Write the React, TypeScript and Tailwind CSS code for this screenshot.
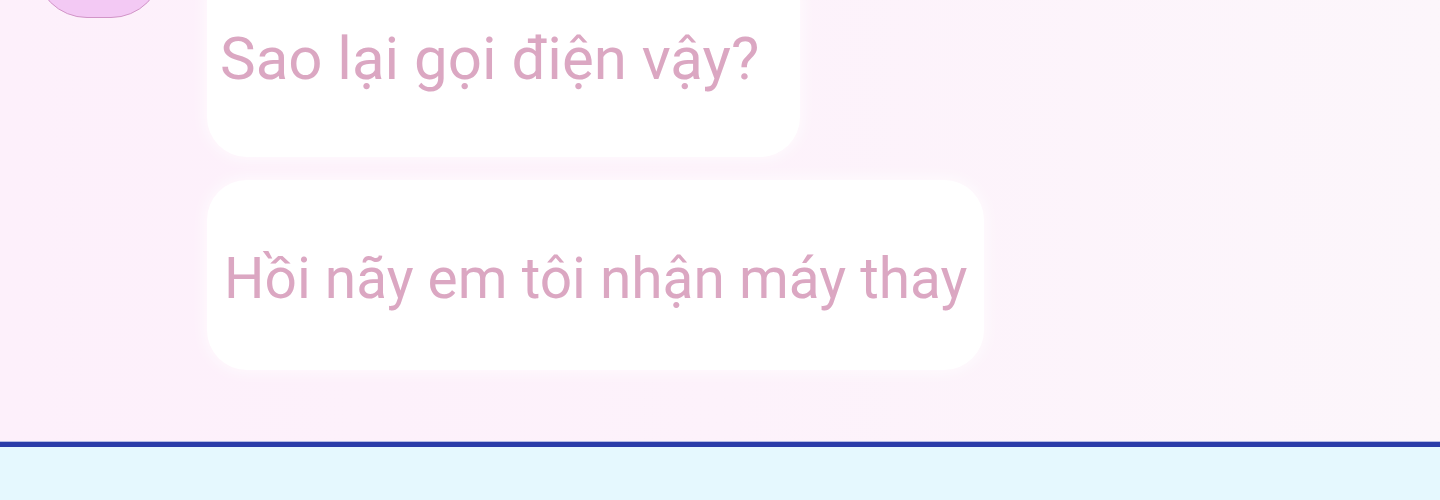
import React from 'react';

const messages = [
  { text: 'Sao lại gọi điện vậy?', box: 'w-[593px] h-[194px] pl-[13px]', size: 'text-[60px] pb-[2px]' },
  { text: 'Hồi nãy em tôi nhận máy thay', box: 'w-[777px] h-[190px] pl-[17px]', size: 'text-[56.8px] pt-[8px]' },
];

export default function App() {
  return (
    <div className="h-[500px] w-full overflow-hidden flex flex-col font-['Roboto','Noto_Sans',sans-serif]">
      {/* Chat area */}
      <section className="h-[441px] shrink-0 bg-gradient-to-r from-[#fdf0fb] via-[#fdf2fb] to-[#fcf6fb] overflow-hidden">
        <div className="flex items-start pl-[35px] gap-[44px]">
          {/* Avatar */}
          <div className="w-[128px] h-[128px] -mt-[110px] shrink-0 rounded-[52px] bg-[#f3c9f4] border-[1.5px] border-[#d295c8]" />

          {/* Bubbles */}
          <div className="flex flex-col gap-[23px] -mt-[37px]">
            {messages.map((m) => (
              <div
                key={m.text}
                className={`${m.box} flex items-center rounded-[40px] bg-white shadow-[0_0_14px_4px_rgba(255,255,255,0.6)]`}
              >
                <span className={`${m.size} leading-none text-[#dba7c2] whitespace-nowrap`}>{m.text}</span>
              </div>
            ))}
          </div>
        </div>
      </section>

      {/* Divider */}
      <div className="h-px bg-[#b5bbe4]" />
      <div className="h-[5px] bg-[#2a3ca9]" />

      {/* Input area */}
      <div className="flex-1 bg-[#e5f8fe]" />
    </div>
  );
}
